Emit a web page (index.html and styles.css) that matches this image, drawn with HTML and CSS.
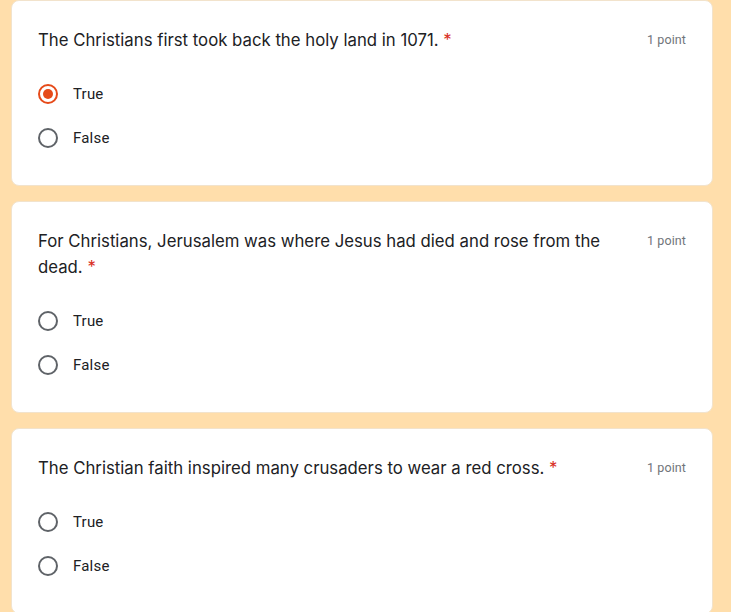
FILE: index.html
```html
<!DOCTYPE html>
<html>
<head>
<meta charset="utf-8">
<link rel="stylesheet" href="styles.css">
</head>
<body>
<div class="form">
  <div class="card">
    <div class="head">
      <div class="title">The Christians first took back the holy land in 1071. <span class="req">*</span></div>
      <div class="points">1 point</div>
    </div>
    <div class="options">
      <div class="opt"><span class="radio checked"></span><span class="label">True</span></div>
      <div class="opt"><span class="radio"></span><span class="label">False</span></div>
    </div>
  </div>
  <div class="card">
    <div class="head">
      <div class="title">For Christians, Jerusalem was where Jesus had died and rose from the dead. <span class="req">*</span></div>
      <div class="points">1 point</div>
    </div>
    <div class="options">
      <div class="opt"><span class="radio"></span><span class="label">True</span></div>
      <div class="opt"><span class="radio"></span><span class="label">False</span></div>
    </div>
  </div>
  <div class="card">
    <div class="head">
      <div class="title">The Christian faith inspired many crusaders to wear a red cross. <span class="req">*</span></div>
      <div class="points">1 point</div>
    </div>
    <div class="options">
      <div class="opt"><span class="radio"></span><span class="label">True</span></div>
      <div class="opt"><span class="radio"></span><span class="label">False</span></div>
    </div>
  </div>
</div>
</body>
</html>
```

FILE: styles.css
```css
html, body {
  margin: 0;
  padding: 0;
  background: #ffdeab;
}
body {
  font-family: Roboto, "Liberation Sans", Arial, sans-serif;
  color: #202124;
}
.form {
  width: 702px;
  margin-left: 11px;
  display: flex;
  flex-direction: column;
  gap: 15px;
}
.card {
  background: #fff;
  border: 1px solid #f2e3cc;
  border-radius: 8px;
  padding: 26px 25px 25px 26px;
}
.head {
  display: flex;
  align-items: flex-start;
  justify-content: space-between;
}
.title {
  font-family: Inter, "Open Sans", Roboto, sans-serif;
  font-size: 16.75px;
  line-height: 26px;
  letter-spacing: 0;
  max-width: 575px;
}
.req {
  color: #d93025;
}
.points {
  font-size: 12.5px;
  line-height: 24px;
  padding-top: 1px;
  color: #70757a;
  white-space: nowrap;
  margin-right: 1px;
  letter-spacing: 0.1px;
}
.options {
  margin-top: 19px;
  display: flex;
  flex-direction: column;
}
.opt {
  height: 44px;
  display: flex;
  align-items: center;
}
.radio {
  box-sizing: border-box;
  width: 20px;
  height: 20px;
  border: 2px solid #5f6368;
  border-radius: 50%;
  display: flex;
  align-items: center;
  justify-content: center;
  flex: none;
}
.radio.checked {
  border-color: #e64a19;
}
.radio.checked::after {
  content: "";
  width: 10px;
  height: 10px;
  border-radius: 50%;
  background: #e64a19;
}
.label {
  margin-left: 15px;
  font-size: 15px;
  letter-spacing: 0.2px;
}
```
